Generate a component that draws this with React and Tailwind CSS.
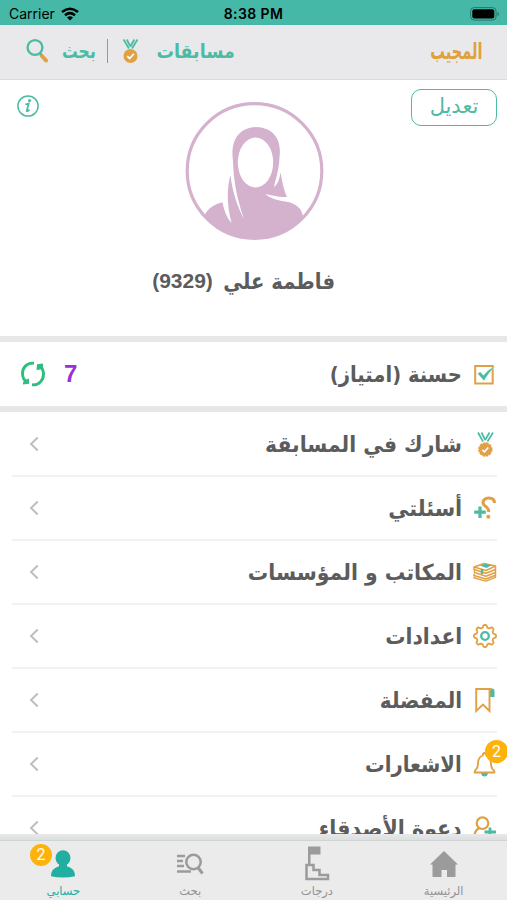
const TEAL = '#4dbba3'
const GOLD = '#e2a045'

function MedalIcon({ className }) {
  return (
    <svg viewBox="0 0 16 26" className={className} fill="none">
      <path d="M1 1.500L6.500 10.500M4.200 1.500L8 8.500M15 1.500L9.500 10.500M11.800 1.500L8 8.500" stroke={TEAL} strokeWidth="1.800" />
      <circle cx="8" cy="18" r="7" fill={GOLD} />
      <path d="M4.800 18.200l2.300 2.300 4.300-4.800" stroke="#fff" strokeWidth="1.700" />
    </svg>
  )
}

function ScallopMedalIcon() {
  return (
    <svg viewBox="0 0 24 26" className="w-6 h-[26px]" fill="none">
      <path d="M5 1.500L10 10.500M8.500 1.500L12.200 9M20 1.500L14.500 10.500M16.500 1.500L12.200 9" stroke={TEAL} strokeWidth="1.700" />
      <circle cx="12.300" cy="18.500" r="6.200" fill={GOLD} />
      <circle cx="12.300" cy="18.500" r="6.200" stroke={GOLD} strokeWidth="2" strokeDasharray="2.500 .75" />
      <path d="M9.300 18.800l2.200 2 3.800-4.300" stroke="#fff" strokeWidth="1.700" />
    </svg>
  )
}

function SearchIcon() {
  return (
    <svg viewBox="0 0 24 26" className="w-6 h-[26px]" fill="none">
      <path d="M16.500 17.500L21 22.500" stroke={GOLD} strokeWidth="4" strokeLinecap="round" />
      <circle cx="10" cy="9.500" r="7.400" stroke={TEAL} strokeWidth="2.400" />
      <path d="M15 15l1.500 1.800" stroke={TEAL} strokeWidth="2" />
    </svg>
  )
}

function CheckIcon() {
  return (
    <svg viewBox="0 0 24 24" className="w-6 h-6 shrink-0" fill="none">
      <path d="M2.200 4h17.500v17.500H2.200z" stroke={GOLD} strokeWidth="2" />
      <path d="M4.500 11.500l2.800-1.700 3.200 3.500Q15 7 22.800 4Q16 10 11 19z" fill={TEAL} stroke="#fff" strokeWidth=".4" />
    </svg>
  )
}

function QuestionIcon() {
  return (
    <svg viewBox="0 0 24 26" className="w-6 h-[26px]" fill="none">
      <path d="M21.500 8C21.500 4.500 19 3 15.800 3C12 3 9.500 5.500 10.200 8.500C11 12 16.500 11.500 15.500 17" stroke={GOLD} strokeWidth="3.200" />
      <circle cx="15.300" cy="21.700" r="2" fill={GOLD} />
      <path d="M7 11.500v11.500M1.200 17.200h11.600" stroke={TEAL} strokeWidth="3.200" />
    </svg>
  )
}

function BooksIcon() {
  return (
    <svg viewBox="0 0 24 20" className="w-6 h-5" fill="none" stroke={GOLD} strokeWidth="1.500" strokeLinejoin="round">
      <path d="M1 5L11 1.500L22.500 4L13 8.500z" />
      <path d="M1 5v2.500l12 3.800l10-4M1.500 8.500v2l11.500 3.700l10-4M1 11.800v1.700l12 3.500l10-4M1 14.800v1l12 3.300l10-4M22.500 4v11" />
      <path d="M7 3.500l5-1.800 6.500 1.500-5 2.800z" fill={TEAL} stroke="none" />
      <path d="M9 7v5" stroke={TEAL} strokeWidth="2.400" />
    </svg>
  )
}

function gearPath() {
  const points = []
  for (let i = 0; i < 96; i++) {
    const a = (i / 96) * Math.PI * 2
    const r = 9.800 + 1.300 * Math.tanh(2 * Math.cos(a * 8))
    points.push((12 + r * Math.sin(a)).toFixed(2) + ' ' + (12 - r * Math.cos(a)).toFixed(2))
  }
  return 'M' + points.join('L') + 'z'
}

function GearIcon() {
  return (
    <svg viewBox="0 0 24 24" className="w-6 h-6" fill="none">
      <path d={gearPath()} stroke={GOLD} strokeWidth="1.800" strokeLinejoin="round" />
      <circle cx="12" cy="12" r="3.800" stroke={TEAL} strokeWidth="2.300" />
    </svg>
  )
}

function BookmarkIcon() {
  return (
    <svg viewBox="0 0 24 26" className="w-6 h-[26px]" fill="none">
      <path d="M16.500 1.500h2.500q2.500 0 2.500 3v5.500h-5z" fill={TEAL} />
      <path d="M18.500 2H3.200V24l6.800-6.500 6.500 6.500V4.500q0-2.500 2-2.500" stroke={GOLD} strokeWidth="1.900" />
    </svg>
  )
}

function BellIcon() {
  return (
    <svg viewBox="0 0 24 26" className="w-6 h-[26px]" fill="none">
      <path d="M8 22h7q-.5 3.500-3.500 3.500T8 22z" fill={TEAL} />
      <path
        d="M9.800 4.500Q9.800 2 11.500 2T13.200 4.500Q17.500 6 17.800 11Q18 16 19.500 18Q21.500 19.500 21.500 21.500H1.500Q1.500 19.500 3.500 18Q5 16 5.200 11Q5.500 6 9.800 4.500z"
        stroke={GOLD}
        strokeWidth="1.800"
        strokeLinejoin="round"
      />
    </svg>
  )
}

function InviteIcon() {
  return (
    <svg viewBox="0 0 24 24" className="w-6 h-6 overflow-visible" fill="none">
      <circle cx="9.500" cy="7.200" r="5.800" stroke={GOLD} strokeWidth="2.200" />
      <path d="M6.500 12Q2 14 1.500 19H12" stroke={GOLD} strokeWidth="2.200" />
      <path d="M17 11.500v9M11.500 16h11.500" stroke={TEAL} strokeWidth="2.800" />
    </svg>
  )
}

function RefreshIcon() {
  return (
    <svg viewBox="0 0 26 26" className="w-[26px] h-[26px]" fill="none">
      <path d="M14 2.200C7 1.500 2.500 6.500 2.500 12.500C2.500 16 4 19 6.500 21" stroke="#2fbd80" strokeWidth="2.900" />
      <path d="M12 23.800C19 24.500 23.500 19 23.500 13.200C23.500 9.500 22 6.500 19.500 4.800" stroke="#2fbd80" strokeWidth="2.900" />
      <path d="M17 3.200l6-.7v4l-2.500 2-4 .5zM9 22.800l-6 .7v-2l2-2.500 4-1.500z" fill="#2fbd80" />
    </svg>
  )
}

function Avatar() {
  return (
    <svg viewBox="0 0 140 140" className="w-[140px] h-[140px]">
      <circle cx="70.500" cy="70" r="67.300" fill="#fff" />
      <path
        d="M20 115C24 107 32 102 38.500 101.500C40 110 43 117 47.500 122C43 105 42.500 88 46.500 74C48 89 53 105 60 118C53 98 49.500 80 49 60C46 38 56 26.500 72 26C89 26.500 98 38 95.500 56C95 70 91 80 90 86C94 83 96 77 96.500 71C98 80 100 90 103 96C95 96.500 86 94 81 93C87 98 96 100 104 101C112 103 118 107 119 116A67 67 0 0 1 20 115z"
        fill="#d4b1cd"
      />
      <circle cx="70.500" cy="70" r="67.300" fill="none" stroke="#d4b1cd" strokeWidth="3.200" />
      <ellipse cx="71.500" cy="61.500" rx="17.700" ry="25" fill="#fff" />
    </svg>
  )
}

function Label({ text, className }) {
  return <span className={'inline-block origin-right whitespace-nowrap leading-[30px] ' + className}>{text}</span>
}

function Row({ icon, label, width, badge }) {
  return (
    <div className="h-16 mr-[10px] ml-3 border-b-2 border-[#f2f2f2] flex items-center shrink-0">
      <div className="relative w-6 flex justify-center">
        {icon}
        {badge && (
          <span className="absolute -top-[11px] left-[12px] w-[23px] h-[23px] rounded-full bg-[#fdb30b] text-white text-[16px] leading-[23px] text-center font-['Roboto',sans-serif]">
            {badge}
          </span>
        )}
      </div>
      <Label text={label} className={'mr-[11px] text-[20px] font-bold text-[#5c5c5c] scale-y-110 ' + width} />
      <svg viewBox="0 0 10 16" className="w-[10px] h-4 mr-auto ml-[17px]" fill="none">
        <path d="M8.700 1.500L2 8l6.700 6.500" stroke="#bdbdbd" strokeWidth="1.900" />
      </svg>
    </div>
  )
}

function Tab({ icon, label, active, badge }) {
  return (
    <div className={'relative flex-1 flex flex-col items-center pt-[5px] text-[11.500px] ' + (active ? 'text-[#22aea0]' : 'text-[#929292]')}>
      <div className="h-[35px] flex items-center">{icon}</div>
      <span className="leading-[18px] mt-px">{label}</span>
      {badge && (
        <span className="absolute top-[3px] left-[30px] w-[22px] h-[22px] rounded-full bg-[#fdb30b] text-white text-[16px] leading-[22px] text-center font-['Roboto',sans-serif]">
          {badge}
        </span>
      )}
    </div>
  )
}

const rows = [
  { icon: <ScallopMedalIcon />, label: 'شارك في المسابقة', width: 'scale-x-[1.015]' },
  { icon: <QuestionIcon />, label: 'أسئلتي', width: 'scale-x-[1.04]' },
  { icon: <BooksIcon />, label: 'المكاتب و المؤسسات', width: 'scale-x-[1.02]' },
  { icon: <GearIcon />, label: 'اعدادات', width: 'scale-x-[1.01]' },
  { icon: <BookmarkIcon />, label: 'المفضلة', width: '' },
  { icon: <BellIcon />, label: 'الاشعارات', width: 'scale-x-[.98]', badge: '2' },
  { icon: <InviteIcon />, label: 'دعوة الأصدقاء', width: 'scale-x-[1.03]' },
]

export default function App() {
  return (
    <div dir="rtl" className="w-[507px] h-[900px] overflow-hidden bg-white flex flex-col font-['DejaVu_Sans',sans-serif]">
      <div dir="ltr" className="h-[25px] shrink-0 bg-[#45b8a7] grid grid-cols-3 items-center px-[9px] text-black font-['Inter',sans-serif] text-[14px] pt-[2px]">
        <div className="flex items-center gap-[6px]">
          <span>Carrier</span>
          <svg viewBox="0 0 18 14" className="w-[18px] h-[14px]" fill="none" stroke="#000" strokeWidth="2.500">
            <path d="M1 5Q9-1.500 17 5M4 8.200Q9 4 14 8.200" />
            <path d="M6 10.500Q9 8 12 10.500L9 13.500z" fill="#000" stroke="none" />
          </svg>
        </div>
        <span className="text-center font-semibold text-[14px] tracking-[.4px] whitespace-nowrap">8:38 PM</span>
        <svg viewBox="0 0 30 14" className="w-[30px] h-[14px] justify-self-end -mr-[2px]">
          <rect x=".6" y=".6" width="25.500" height="12.500" rx="3.500" fill="none" stroke="#237a6e" />
          <rect x="2.300" y="2.300" width="22" height="9.200" rx="2" />
          <path d="M27.500 5v4q1.500-.5 1.500-2t-1.500-2z" fill="#237a6e" />
        </svg>
      </div>

      <div className="h-[55px] shrink-0 bg-[#e9e9eb] border-b border-[#dcdcdf] flex items-center pr-6 pl-[25px] pb-[2px] text-[18px] font-bold text-[#4dbba3]">
        <Label text="المجيب" className="text-[#e0a03c] text-[20px] scale-x-[.73] scale-y-115" />
        <div className="mr-auto flex items-center">
          <Label text="مسابقات" className="scale-x-[.97] scale-y-110 -ml-[1px]" />
          <MedalIcon className="w-[17px] h-[26px] mr-[16px] shrink-0" />
          <span className="w-[1.500px] h-6 bg-[#4dbba3] mr-[14px]" />
          <Label text="بحث" className="mr-[11px] scale-x-[.87] scale-y-110 -ml-[5px]" />
          <div className="mr-[13px]"><SearchIcon /></div>
        </div>
      </div>

      <div className="h-[256px] shrink-0 relative flex flex-col items-center pt-[21px]">
        <button className="absolute right-[10px] top-[9px] w-[86px] h-[37px] rounded-[10px] border-[1.500px] border-[#4dbba3] text-[#4dbba3] text-[21px] leading-[30px] pb-1">
          تعديل
        </button>
        <svg viewBox="0 0 22 22" className="absolute left-[17px] top-[15px] w-[22px] h-[22px]" fill="none" stroke={TEAL}>
          <circle cx="11" cy="11" r="10.100" strokeWidth="1.500" />
          <circle cx="12.600" cy="5.500" r="1.600" fill={TEAL} stroke="none" />
          <path d="M8.300 9.500l3.400-.9-1.900 7q-.2 1.700 2.700-.8" strokeWidth="1.800" />
        </svg>
        <Avatar />
        <div className="mt-[24px] mr-5 flex items-center gap-[8px] text-[20px] font-bold text-[#5c5c5c]">
          <Label text="فاطمة علي" className="scale-x-[.98] scale-y-110" />
          <span className="font-['Liberation_Sans',sans-serif] text-[21px]">(9329)</span>
        </div>
      </div>

      <div className="h-[76px] shrink-0 border-y-[6px] border-[#e7e7e7] flex items-center pr-[10px] pl-5">
        <CheckIcon />
        <Label text="حسنة (امتياز)" className="mr-[11px] text-[20px] font-bold text-[#5c5c5c] scale-x-[.98] scale-y-110" />
        <span className="mr-auto text-[24px] font-bold text-[#9a30d8] font-['Liberation_Sans',sans-serif]">7</span>
        <div className="mr-[18px]"><RefreshIcon /></div>
      </div>

      <div className="h-[422px] shrink-0 overflow-hidden flex flex-col pt-px">
        {rows.map((row) => (
          <Row key={row.label} {...row} />
        ))}
      </div>

      <div className="h-[66px] shrink-0 bg-[#ebebeb] flex flex-col">
        <div className="h-[7px] shrink-0 bg-gradient-to-b from-[#e8e8e8] to-[#dcdfe0] border-b border-[#cfd3d4]" />
        <div className="flex grow">
          <Tab
            label="الرئيسية"
            icon={
              <svg viewBox="0 0 28 28" className="w-7 h-7" fill="#9b9b9b">
                <path d="M14 1L28 14.500H25.500V27H17V20H11.500V27H2.500V14.500H0z" />
              </svg>
            }
          />
          <Tab
            label="درجات"
            icon={
              <svg viewBox="0 0 26 35" className="w-[26px] h-[35px]" fill="none" stroke="#9b9b9b" strokeWidth="2.500">
                <path d="M4 .5h12.500v8H6.500V18.500H4z" fill="#9b9b9b" stroke="none" />
                <path d="M2.500 19H9.500v5h6v5h8.500v4H2.500z" />
              </svg>
            }
          />
          <Tab
            label="بحث"
            icon={
              <svg viewBox="0 0 28 24" className="w-7 h-6" fill="none" stroke="#9b9b9b" strokeWidth="2.500">
                <path d="M1 4h8M1 9h6M1 14h7M1 19.500h14" />
                <circle cx="17.500" cy="10" r="7.200" />
                <path d="M22 15.500l4.500 6" strokeWidth="3" />
              </svg>
            }
          />
          <Tab
            label="حسابي"
            active
            badge="2"
            icon={
              <svg viewBox="0 0 26 28" className="w-[26px] h-7" fill="#22aea0">
                <ellipse cx="13" cy="8" rx="7.500" ry="7.800" />
                <path d="M9 13h8v3.200q8 2 8 10Q13 29 1 26.200q0-8 8-10z" />
              </svg>
            }
          />
        </div>
      </div>
    </div>
  )
}
